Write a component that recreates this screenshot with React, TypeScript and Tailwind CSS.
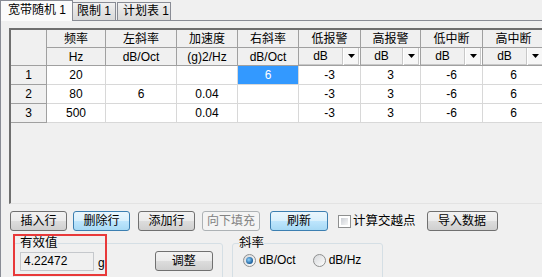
import React from "react";

type Col = { name: string; unit: string; w: string; dd?: boolean };

const columns: Col[] = [
  { name: "频率", unit: "Hz", w: "w-[59px]" },
  { name: "左斜率", unit: "dB/Oct", w: "w-[71px]" },
  { name: "加速度", unit: "(g)2/Hz", w: "w-[61px]" },
  { name: "右斜率", unit: "dB/Oct", w: "w-[61px]" },
  { name: "低报警", unit: "dB", w: "w-[62px]", dd: true },
  { name: "高报警", unit: "dB", w: "w-[60px]", dd: true },
  { name: "低中断", unit: "dB", w: "w-[62px]", dd: true },
  { name: "高中断", unit: "dB", w: "w-[62px]", dd: true },
];

// rows of the table, one array per row, same order as columns
const rows: string[][] = [
  ["20", "", "", "6", "-3", "3", "-6", "6"],
  ["80", "6", "0.04", "", "-3", "3", "-6", "6"],
  ["500", "", "0.04", "", "-3", "3", "-6", "6"],
];

const btnBase =
  "h-[20px] flex items-center justify-center rounded-[3px] border leading-[14px]";
const btnNormal =
  "border-[#707070] bg-[linear-gradient(#f2f2f2,#ebebeb_50%,#dddddd_50%,#cfcfcf)]";
const btnHot =
  "border-[#3c7fb1] bg-[linear-gradient(#eaf6fd,#d9f0fc_50%,#bee6fd_50%,#a7d9f5)]";

function DropArrow() {
  return (
    <svg width="7" height="4" viewBox="0 0 7 4">
      <polygon points="0,0 7,0 3.5,4" fill="#000" />
    </svg>
  );
}

function Tabs() {
  return (
    <div className="flex items-end h-[20px]">
      <div className="relative z-10 -mb-[1px] h-[21px] w-[73px] border border-b-0 border-[#898c95] bg-[#fbfbfb] pl-[7px] pt-[2px]">
        宽带随机 1
      </div>
      <div className="h-[18px] w-[43px] border border-l-0 border-b-0 border-[#898c95] bg-[linear-gradient(#f2f2f2,#e3e3e3_50%,#d9d9d9)] pl-[4px] pt-[1px]">
        限制 1
      </div>
      <div className="ml-[1px] h-[18px] w-[54px] border border-b-0 border-[#898c95] bg-[linear-gradient(#f2f2f2,#e3e3e3_50%,#d9d9d9)] pl-[5px] pt-[1px]">
        计划表 1
      </div>
    </div>
  );
}

function Grid() {
  return (
    <div className="ml-[8px] mt-[7px] h-[176px] w-[540px] flex border-t-2 border-l-2 border-b border-[#6f6f6f] border-b-[#e3e3e3] bg-[#f0f0f0]">
      {/* row header column */}
      <div className="w-[36px] shrink-0 flex flex-col">
        <div className="h-[36px] border-r border-b border-[#a0a0a0]" />
        {rows.map((_, i) => (
          <div
            key={i}
            className="h-[19px] flex items-center justify-center border-r border-b border-[#a0a0a0]"
          >
            {i + 1}
          </div>
        ))}
      </div>

      {columns.map((c, ci) => (
        <div key={c.name} className={`${c.w} shrink-0 flex flex-col`}>
          <div className="h-[18px] flex items-center justify-center border-r border-b border-[#a0a0a0]">
            {c.name}
          </div>
          {c.dd ? (
            <div className="h-[18px] flex border-r border-b border-[#a0a0a0] bg-white">
              <div className="flex-1 flex items-center justify-center bg-[#f0f0f0] border-r border-b border-[#c8c8c8]">
                {c.unit}
              </div>
              <div className="w-[15px] mx-[1px] flex items-center justify-center bg-[#f7f7f7] border-r border-b border-[#c8c8c8]">
                <DropArrow />
              </div>
            </div>
          ) : (
            <div className="h-[18px] flex items-center justify-center border-r border-b border-[#a0a0a0]">
              {c.unit}
            </div>
          )}
          {rows.map((r, ri) => {
            const selected = ri === 0 && ci === 3;
            return (
              <div
                key={ri}
                className={`h-[19px] flex items-center justify-center border-r border-b border-[#d8d8d8] ${
                  selected ? "bg-[#3399ff] text-white" : "bg-white"
                }`}
              >
                {r[ci]}
              </div>
            );
          })}
        </div>
      ))}
    </div>
  );
}

function ButtonRow() {
  return (
    <div className="flex items-center ml-[9px] mt-[7px] h-[20px]">
      <button className={`${btnBase} ${btnNormal} w-[57px]`}>插入行</button>
      <button className={`${btnBase} ${btnHot} w-[57px] ml-[6px]`}>删除行</button>
      <button className={`${btnBase} ${btnNormal} w-[57px] ml-[8px]`}>添加行</button>
      <button className={`${btnBase} w-[58px] ml-[7px] border-[#adb2b5] bg-[#f4f4f4] text-[#838383]`}>
        向下填充
      </button>
      <button className={`${btnBase} ${btnHot} w-[58px] ml-[10px]`}>刷新</button>
      <label className="flex items-center ml-[10px]">
        <span className="w-[13px] h-[13px] border border-[#8e8f8f] bg-white p-[2px]">
          <span className="block w-full h-full bg-[linear-gradient(135deg,#cbcfd5,#f6f6f6)]" />
        </span>
        <span className="ml-[2px] text-[12.5px]">计算交越点</span>
      </label>
      <button className={`${btnBase} ${btnNormal} w-[71px] ml-[11px]`}>导入数据</button>
    </div>
  );
}

function Radio({ checked, label }: { checked?: boolean; label: string }) {
  return (
    <label className="flex items-center">
      <span className="w-[13px] h-[13px] rounded-full border border-[#8e8f8f] bg-[linear-gradient(135deg,#d6d8db,#fdfdfd)] flex items-center justify-center">
        {checked && (
          <span className="w-[7px] h-[7px] rounded-full bg-[radial-gradient(circle_at_40%_40%,#8fd3ff,#1a5d99_70%)]" />
        )}
      </span>
      <span className="ml-[3px]">{label}</span>
    </label>
  );
}

export default function App() {
  return (
    <div className="relative w-[542px] h-[277px] overflow-hidden bg-[#f0f0f0] text-[12px] leading-[14px] text-black font-['Liberation_Sans','Noto_Sans_CJK_SC',sans-serif]">
      <Tabs />
      <div className="h-[257px] border-t border-l border-[#898c95]">
        <Grid />
        <ButtonRow />

        <div className="flex ml-[12px] mt-[5px]">
          <fieldset className="w-[210px] h-[60px] border border-[#d5dfe5] rounded-[3px]">
            <legend className="ml-[6px] px-0 leading-[14px] text-[12.5px]">有效值</legend>
            <div className="flex items-center mt-[1px] pl-[6px]">
              <div className="w-[74px] h-[19px] border border-[#c5c8cc] bg-[#f0f0f0] pl-[3px] flex items-center">
                4.22472
              </div>
              <span className="ml-[4px] mt-[4px]">g</span>
              <button className={`${btnBase} ${btnNormal} w-[58px] ml-[50px]`}>调整</button>
            </div>
          </fieldset>

          <fieldset className="ml-[9px] w-[151px] h-[60px] border border-[#d5dfe5] rounded-[3px]">
            <legend className="ml-[6px] px-0 leading-[14px] text-[12.5px]">斜率</legend>
            <div className="flex items-center mt-[3px] pl-[10px]">
              <Radio checked label="dB/Oct" />
              <div className="ml-[17px]">
                <Radio label="dB/Hz" />
              </div>
            </div>
          </fieldset>
        </div>
      </div>

      {/* red highlight drawn over the rms group */}
      <div className="absolute left-[13px] top-[234px] w-[94px] h-[42px] border-2 border-[#e8393a]" />
    </div>
  );
}
